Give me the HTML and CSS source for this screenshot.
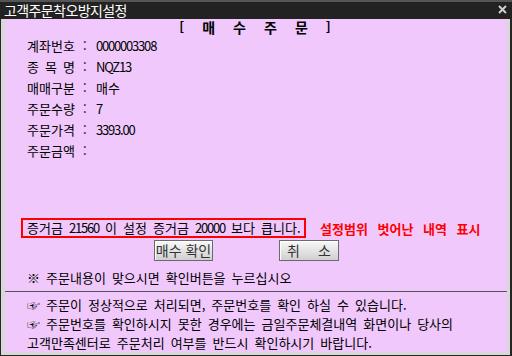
FILE: index.html
```html
<!DOCTYPE html>
<html lang="ko">
  <head>
    <meta charset="UTF-8" />
    <title>고객주문착오방지설정</title>
    <link rel="stylesheet" href="styles.css">
  </head>
  <body>
    <div class="window">
      <div class="titleBar">
        <span class="title">고객주문착오방지설정</span>
        <svg class="closeIcon" width="9" height="9" viewBox="0 0 9 9">
          <path d="M1 1 L8 8 M8 1 L1 8" stroke="#cfcfcf" stroke-width="2" />
        </svg>
      </div>

      <div class="frame">
        <div class="content">
          <div class="heading">
            <span class="bracket">[</span><span>매</span><span>수</span><span>주</span><span>문</span><span class="bracket">]</span>
          </div>

          <div class="infoList">
            <div class="infoRow"><span class="label">계좌번호</span><span class="colon">:</span><span class="num">0000003308</span></div>
            <div class="infoRow"><span class="label">종 목 명</span><span class="colon">:</span><span class="num">NQZ13</span></div>
            <div class="infoRow"><span class="label">매매구분</span><span class="colon">:</span><span>매수</span></div>
            <div class="infoRow"><span class="label">주문수량</span><span class="colon">:</span><span class="num">7</span></div>
            <div class="infoRow"><span class="label">주문가격</span><span class="colon">:</span><span class="num">3393.00</span></div>
            <div class="infoRow"><span class="label">주문금액</span><span class="colon">:</span><span></span></div>
          </div>

          <div class="warnRow">
            <div class="warnBox">증거금 <span class="num">21560</span> 이 설정 증거금 <span class="num">20000</span> 보다 큽니다.</div>
            <span class="warnNote">설정범위 벗어난 내역 표시</span>
          </div>

          <div class="btnContainer">
            <button class="okBtn">매수 확인</button>
            <button class="cancelBtn"><span>취</span><span>소</span></button>
          </div>

          <div class="hint">※ 주문내용이 맞으시면 확인버튼을 누르십시오</div>

          <div class="notes">
            <div class="note">☞ 주문이 정상적으로 처리되면, 주문번호를 확인 하실 수 있습니다.</div>
            <div class="note">☞ 주문번호를 확인하시지 못한 경우에는 금일주문체결내역 화면이나 당사의</div>
            <div class="note">고객만족센터로 주문처리 여부를 반드시 확인하시기 바랍니다.</div>
          </div>
        </div>
      </div>
    </div>
  </body>
</html>
```

FILE: styles.css
```css
html, body {
  margin: 0;
  padding: 0;
}

body {
  font-family: "Noto Sans CJK KR", "Noto Sans", sans-serif;
  font-size: 13px;
  word-spacing: 2.4px;
  color: #000;
}

.window {
  width: 512px;
  height: 356px;
  display: flex;
  flex-direction: column;
  background: #262626;
}

.titleBar {
  height: 17px;
  border-top: 2px solid #555;
  background: #222;
  display: flex;
  align-items: center;
  justify-content: space-between;
  padding: 0 5px 0 4px;
}

.title {
  color: #fff;
  font-size: 14px;
  letter-spacing: -0.6px;
  line-height: 17px;
}

.closeIcon {
  margin-top: -2px;
}

.frame {
  flex: 1;
  margin: 0 2px 2px 1px;
  padding: 0 3px 3px 4px;
  background: #d8d8d8;
  display: flex;
}

.content {
  flex: 1;
  background: #f0c8fc;
  display: flex;
  flex-direction: column;
}

.num {
  letter-spacing: -1.2px;
}

.heading {
  height: 16px;
  line-height: 16px;
  display: flex;
  justify-content: center;
  gap: 18px;
  padding-right: 2px;
  font-weight: bold;
  font-size: 14px;
}

.bracket {
  font-size: 13px;
}

.infoList {
  padding-left: 22px;
}

.infoRow {
  height: 21px;
  line-height: 21px;
  display: flex;
}

.label {
  width: 56px;
}

.colon {
  width: 13px;
}

.warnRow {
  display: flex;
  align-items: center;
  margin-top: 57px;
  padding-left: 16px;
}

.warnBox {
  width: 277px;
  height: 16px;
  line-height: 16px;
  border: 2px solid #ff0000;
  padding-left: 4px;
  white-space: nowrap;
}

.warnNote {
  margin-left: 14px;
  color: #ff0000;
  font-weight: bold;
  word-spacing: 6px;
}

.btnContainer {
  display: flex;
  margin-top: 2px;
  padding-left: 149px;
}

button {
  height: 21px;
  padding: 0;
  border: 1px solid #6a6a6a;
  box-shadow: inset 1px 1px 0 #fff;
  background: linear-gradient(#f8f8f8, #d0d0d0);
  font-family: "Noto Sans CJK KR", "Noto Sans", sans-serif;
  font-size: 14px;
  color: #333;
  line-height: 19px;
}

.okBtn {
  width: 59px;
  word-spacing: 0;
}

.cancelBtn {
  width: 60px;
  margin-left: 66px;
  display: flex;
  justify-content: center;
  gap: 18px;
}

.hint {
  height: 16px;
  line-height: 16px;
  margin-top: 9px;
  padding-left: 22px;
}

.notes {
  margin-top: 5px;
  border-top: 1px solid #555;
  padding: 3px 0 0 22px;
}

.note {
  height: 19px;
  line-height: 19px;
  white-space: nowrap;
}
```
